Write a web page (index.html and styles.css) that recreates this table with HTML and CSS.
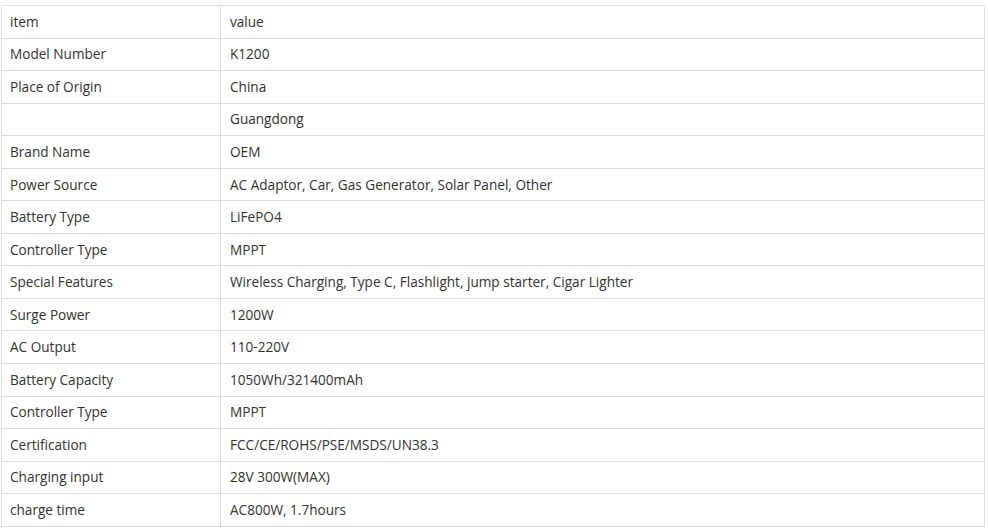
FILE: index.html
```html
<!DOCTYPE html>
<html>
<head>
<meta charset="utf-8">
<link rel="stylesheet" href="styles.css">
</head>
<body>
<table class="spec">
<tbody>
<tr><td class="k">item</td><td>value</td></tr>
<tr><td class="k">Model Number</td><td>K1200</td></tr>
<tr><td class="k">Place of Origin</td><td>China</td></tr>
<tr><td class="k"></td><td>Guangdong</td></tr>
<tr><td class="k">Brand Name</td><td>OEM</td></tr>
<tr><td class="k">Power Source</td><td>AC Adaptor, Car, Gas Generator, Solar Panel, Other</td></tr>
<tr><td class="k">Battery Type</td><td>LiFePO4</td></tr>
<tr><td class="k">Controller Type</td><td>MPPT</td></tr>
<tr><td class="k">Special Features</td><td>Wireless Charging, Type C, Flashlight, jump starter, Cigar Lighter</td></tr>
<tr><td class="k">Surge Power</td><td>1200W</td></tr>
<tr><td class="k">AC Output</td><td>110-220V</td></tr>
<tr><td class="k">Battery Capacity</td><td>1050Wh/321400mAh</td></tr>
<tr><td class="k">Controller Type</td><td>MPPT</td></tr>
<tr><td class="k">Certification</td><td>FCC/CE/ROHS/PSE/MSDS/UN38.3</td></tr>
<tr><td class="k">Charging input</td><td>28V 300W(MAX)</td></tr>
<tr><td class="k">charge time</td><td>AC800W, 1.7hours</td></tr>
</tbody>
</table>
</body>
</html>
```
FILE: styles.css
```css
html, body {
  margin: 0;
  padding: 0;
  background: #fff;
}
body {
  padding: 5px 0 0 1px;
  font-family: "Open Sans", "Liberation Sans", sans-serif;
  font-size: 13.6px;
  color: #333;
}
.spec {
  border-collapse: collapse;
  width: 984px;
  table-layout: fixed;
}
.spec td {
  border: 1px solid #ddd;
  height: 32.56px;
  padding: 0 9px;
  line-height: 20px;
  box-sizing: border-box;
  vertical-align: middle;
  white-space: nowrap;
}
.spec td.k {
  width: 219px;
  padding-left: 8px;
}
```
